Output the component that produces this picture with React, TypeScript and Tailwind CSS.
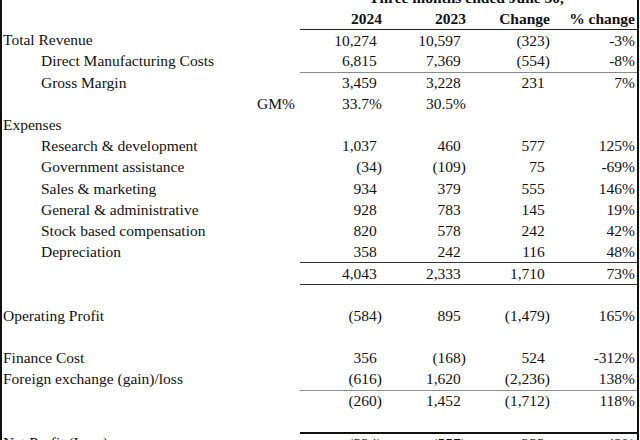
import React from "react";

type Row = {
  label?: string;
  indent?: boolean;
  labelRight?: boolean;
  vals?: (string | null)[];
  bold?: boolean;
  topBorder?: string;
  isHeader?: boolean;
  isTitle?: boolean;
  pctRow?: boolean;
};

const rows: Row[] = [
  { isTitle: true },
  { isHeader: true, vals: ["2024", "2023", "Change", "% change"] },
  { label: "Total Revenue", vals: ["10,274", "10,597", "(323)", "-3%"], topBorder: "border-t border-t-[#222]" },
  { label: "Direct Manufacturing Costs", indent: true, vals: ["6,815", "7,369", "(554)", "-8%"] },
  { label: "Gross Margin", indent: true, vals: ["3,459", "3,228", "231", "7%"], topBorder: "border-t border-t-[#8a8a8a]" },
  { label: "GM%", labelRight: true, vals: ["33.7%", "30.5%", null, null], pctRow: true },
  { label: "Expenses" },
  { label: "Research & development", indent: true, vals: ["1,037", "460", "577", "125%"] },
  { label: "Government assistance", indent: true, vals: ["(34)", "(109)", "75", "-69%"] },
  { label: "Sales & marketing", indent: true, vals: ["934", "379", "555", "146%"] },
  { label: "General & administrative", indent: true, vals: ["928", "783", "145", "19%"] },
  { label: "Stock based compensation", indent: true, vals: ["820", "578", "242", "42%"] },
  { label: "Depreciation", indent: true, vals: ["358", "242", "116", "48%"] },
  { vals: ["4,043", "2,333", "1,710", "73%"], topBorder: "border-t border-t-[#333]" },
  { topBorder: "border-t border-t-[#333]" },
  { label: "Operating Profit", vals: ["(584)", "895", "(1,479)", "165%"] },
  {},
  { label: "Finance Cost", vals: ["356", "(168)", "524", "-312%"] },
  { label: "Foreign exchange (gain)/loss", vals: ["(616)", "1,620", "(2,236)", "138%"] },
  { vals: ["(260)", "1,452", "(1,712)", "118%"], topBorder: "border-t border-t-[#8a8a8a]" },
  {},
  { label: "Net Profit (Loss)", vals: ["(324)", "(557)", "233", "-42%"], topBorder: "border-t-2 border-t-[#111]" },
];

function Num({ v, pct }: { v: string; pct: boolean }) {
  if (pct || v.endsWith("%")) return <span>{v}</span>;
  if (v.startsWith("(")) return <span>{v}</span>;
  return (
    <span>
      {v}
      <span className="invisible">)</span>
    </span>
  );
}

export default function App() {
  return (
    <div
      className="w-[640px] h-[440px] overflow-hidden bg-white text-[#111] border-l-2 border-l-[#111]"
      style={{ fontFamily: '"Liberation Serif", "Times New Roman", serif' }}
    >
      <div className="w-[637px] border-r-2 border-r-[#111] mt-[-13px] text-[15.5px] leading-none">
        {rows.map((r, i) => {
          if (r.isTitle) {
            return (
              <div key={i} className="grid grid-cols-[298px_1fr] h-[21.2px] items-center">
                <div />
                <div className="text-center font-bold pr-[4px]">Three months ended June 30,</div>
              </div>
            );
          }
          return (
            <div key={i} className="grid grid-cols-[298px_83px_84px_84px_86px] h-[21.2px]">
              <div
                className={
                  "flex items-center whitespace-nowrap " +
                  (r.labelRight ? "justify-end pr-[5px]" : r.indent ? "pl-[39px]" : "pl-[1px]")
                }
              >
                {r.label ?? ""}
              </div>
              {[0, 1, 2, 3].map((c) => {
                const v = r.vals ? r.vals[c] : null;
                return (
                  <div
                    key={c}
                    className={
                      "flex items-center justify-end whitespace-nowrap " +
                      (c === 3 ? "pr-[2px] " : "pr-[1px] ") +
                      (r.topBorder ?? "") +
                      (r.isHeader ? " font-bold" : "")
                    }
                  >
                    {v ? r.isHeader ? v : <Num v={v} pct={!!r.pctRow} /> : ""}
                  </div>
                );
              })}
            </div>
          );
        })}
      </div>
    </div>
  );
}
